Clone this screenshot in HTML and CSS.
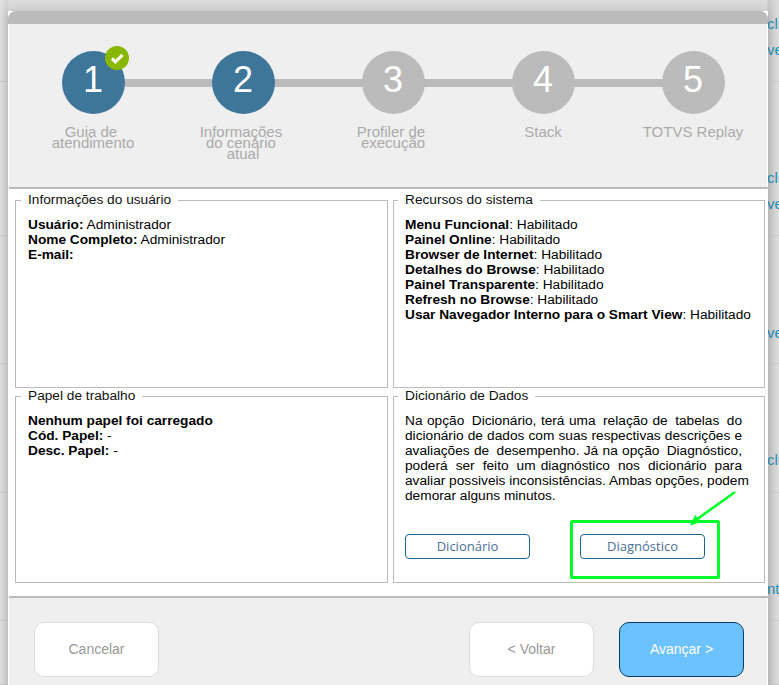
FILE: index.html
```html
<!DOCTYPE html>
<html lang="pt-BR">
<head>
<meta charset="utf-8">
<title>Assistente</title>
<link rel="stylesheet" href="styles.css">
</head>
<body>
<div class="backdrop">
  <div class="bg-row r1"><a>clu</a><a>ve</a></div>
  <div class="bg-row r2"><a>clu</a><a>ve</a></div>
  <div class="bg-row r3"><a>&nbsp;</a><a>ve</a></div>
  <div class="bg-row r4"><a>clu</a></div>
  <div class="bg-row r5"><a>nt</a></div>
  <div class="bg-row r6"></div>
</div>
<div class="modal">
  <div class="titlebar"></div>
  <div class="steps">
    <div class="step done"><div class="circle">1<span class="badge"><svg viewBox="0 0 24 24" width="24" height="24"><path d="M7 12.5l3.4 3.3L17.5 8.8" fill="none" stroke="#fff" stroke-width="3.2"/></svg></span></div><div class="label">Guia de&nbsp;<br>atendimento</div></div>
    <div class="step done"><div class="circle">2</div><div class="label">Informações&nbsp;<br>do cenário&nbsp;<br>atual</div></div>
    <div class="step"><div class="circle">3</div><div class="label">Profiler de&nbsp;<br>execução</div></div>
    <div class="step"><div class="circle">4</div><div class="label">Stack</div></div>
    <div class="step"><div class="circle">5</div><div class="label">TOTVS Replay</div></div>
  </div>
  <div class="content">
    <fieldset class="panel">
      <legend>Informações do usuário</legend>
      <div><b>Usuário:</b> Administrador</div>
      <div><b>Nome Completo:</b> Administrador</div>
      <div><b>E-mail:</b></div>
    </fieldset>
    <fieldset class="panel">
      <legend>Recursos do sistema</legend>
      <div><b>Menu Funcional</b>: Habilitado</div>
      <div><b>Painel Online</b>: Habilitado</div>
      <div><b>Browser de Internet</b>: Habilitado</div>
      <div><b>Detalhes do Browse</b>: Habilitado</div>
      <div><b>Painel Transparente</b>: Habilitado</div>
      <div><b>Refresh no Browse</b>: Habilitado</div>
      <div class="nowrap"><b>Usar Navegador Interno para o Smart View</b>: Habilitado</div>
    </fieldset>
    <fieldset class="panel">
      <legend>Papel de trabalho</legend>
      <div><b>Nenhum papel foi carregado</b></div>
      <div><b>Cód. Papel:</b> -</div>
      <div><b>Desc. Papel:</b> -</div>
    </fieldset>
    <fieldset class="panel dict">
      <legend>Dicionário de Dados</legend>
      <div class="para">
        <div class="jl">Na opção <span class="gap">Dicionário,</span> terá uma <span class="gap">relação</span> de <span class="gap">tabelas</span> <span class="gap">do</span></div>
        <div class="jl">dicionário de dados com suas respectivas descrições e</div>
        <div class="jl">avaliações de <span class="gap">desempenho.</span> Já na opção <span class="gap">Diagnóstico,</span></div>
        <div class="jl">poderá ser feito um <span class="tight">diagnóstico</span> nos dicionário para</div>
        <div class="nowrap">avaliar possiveis inconsistências. Ambas opções, podem</div>
        <div class="nowrap">demorar alguns minutos.</div>
      </div>
      <div class="dict-actions">
        <button class="outline">Dicionário</button>
        <button class="outline">Diagnóstico</button>
      </div>
      <div class="highlight"></div>
      <svg class="arrow" viewBox="0 0 60 50" width="60" height="50"><path d="M46 3L9 29.5" stroke="#00ff2a" stroke-width="2.6" fill="none"/><path d="M1 36.7L6 26l6.6 6.7z" fill="#00ff2a"/></svg>
    </fieldset>
  </div>
  <div class="footer">
    <button class="btn">Cancelar</button>
    <div class="footer-right">
      <button class="btn">&lt; Voltar</button>
      <button class="btn primary">Avançar &gt;</button>
    </div>
  </div>
</div>
</body>
</html>
```
FILE: styles.css
```css
* { box-sizing: border-box; }
html, body { margin: 0; height: 100%; }
body {
  position: relative;
  width: 779px;
  height: 685px;
  overflow: hidden;
  font-family: "Liberation Sans", Arial, sans-serif;
  font-size: 13.7px;
  background: #dcdcdc;
}
.backdrop {
  display: flex;
  flex-direction: column;
  height: 685px;
  background: linear-gradient(90deg, #e0e0e0 0, #d2d2d2 8px, #dcdcdc 9px);
}
.bg-row {
  border-bottom: 1px solid #cacaca;
  padding-left: 767px;
  font-size: 15px;
  line-height: 26px;
  color: #1f8fb5;
  white-space: nowrap;
  background: linear-gradient(90deg, transparent 0, transparent 767px, #c8c8c8 768px, #dedede 779px);
}
.bg-row a { display: block; }
.r1 { height: 82px; padding-top: 11px; }
.r2 { height: 154px; padding-top: 83px; }
.r3 { height: 128px; padding-top: 58px; }
.r4 { height: 129px; padding-top: 83px; }
.r5 { height: 128px; padding-top: 83px; }
.r6 { flex: 1; }
.modal {
  position: absolute;
  left: 8px;
  top: 11px;
  width: 760px;
  height: 690px;
  background: #fff;
  padding: 0 1px;
  box-shadow: 0 0 10px rgba(0,0,0,.18);
}
.titlebar { height: 13px; margin: 0 -1px; background: #bbb; border-radius: 8px 8px 0 0; }
.steps {
  position: relative;
  display: grid;
  grid-template-columns: repeat(5, 150px);
  height: 163px;
  padding: 27px 0 0 9px;
  background: #efefef;
}
.steps::before {
  content: "";
  position: absolute;
  left: 84px;
  width: 600px;
  top: 55px;
  height: 8px;
  background: #bbb;
}
.step { position: relative; display: flex; flex-direction: column; align-items: center; }
.circle {
  position: relative;
  width: 63px;
  height: 63px;
  border-radius: 50%;
  background: #bbb;
  color: #fff;
  font-size: 36px;
  line-height: 58px;
  text-align: center;
}
.done .circle { background: #3e769a; }
.badge {
  position: absolute;
  left: 43px;
  top: -5px;
  width: 24px;
  height: 24px;
  border-radius: 50%;
  background: #88b800;
  display: block;
}
.badge svg { display: block; }
.label {
  margin-top: 12px;
  color: #aaa;
  font-size: 15px;
  line-height: 11px;
  text-align: center;
}
.content {
  background: #fff;
  border-top: 2px solid #bbb;
  border-bottom: 2px solid #bbb;
  margin-right: -1px;
  height: 411px;
  padding: 3px 2px 0 6px;
  display: grid;
  grid-template-columns: 373px 372px;
  grid-template-rows: 196px 195px;
  column-gap: 5px;
}
.panel {
  margin: 0;
  padding: 9px 12px 0;
  border: 1px solid #bbb;
  min-width: 0;
  line-height: 15px;
  color: #000;
  position: relative;
}
.panel:nth-child(even) { padding-left: 11px; }
.panel legend { padding: 0 7px; margin-left: -7px; color: #111; line-height: 16px; }
.nowrap { white-space: nowrap; }
.jl { text-align: justify; text-align-last: justify; width: 337px; }
.gap { margin-left: 3px; }
.tight { margin-left: -3px; }
.dict-actions { display: flex; gap: 50px; margin-top: 31px; }
.outline {
  width: 125px;
  height: 25px;
  background: #fff;
  border: 1px solid #1c6491;
  border-radius: 4px;
  color: #4a7097;
  font-family: "Open Sans", sans-serif;
  font-size: 13px;
  padding: 0 0 2px;
}
.highlight {
  position: absolute;
  left: 176px;
  top: 116px;
  width: 150px;
  height: 59px;
  border: 3px solid #00ff2a;
  border-radius: 2px;
}
.arrow { position: absolute; left: 295px; top: 85px; }
.footer {
  display: flex;
  justify-content: space-between;
  padding: 24px 23px 0 25px;
  height: 110px;
  background: #efefef;
}
.footer-right { display: flex; gap: 25px; }
.btn {
  width: 125px;
  height: 55px;
  border-radius: 10px;
  background: #fff;
  border: 1px solid #ddd;
  color: #999;
  font-family: "Liberation Sans", Arial, sans-serif;
  font-size: 14px;
  padding: 0 0 2px;
}
.primary { background: #6bc2ff; border-color: #0f3b5c; color: #fff; }
```
